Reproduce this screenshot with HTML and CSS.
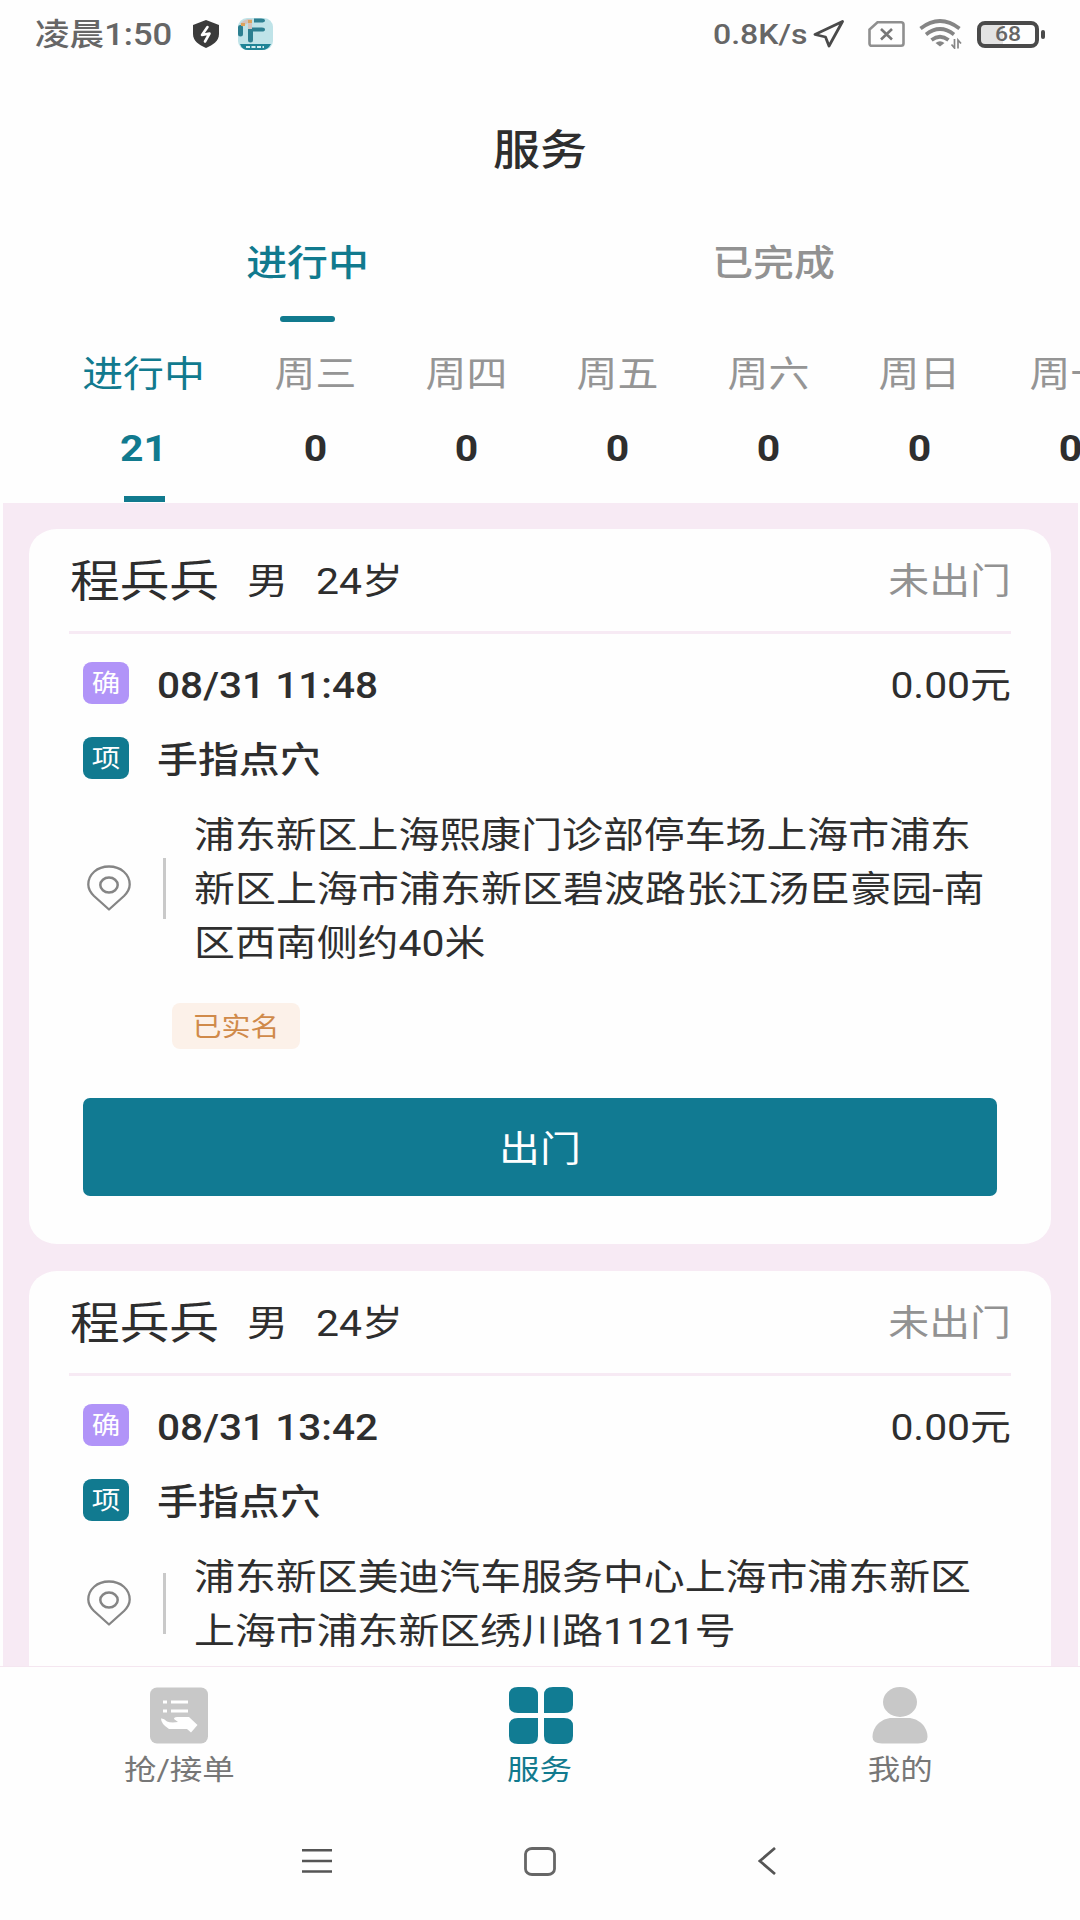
FILE: index.html
```html
<!DOCTYPE html>
<html lang="zh-CN">
<head>
<meta charset="utf-8">
<title>服务</title>
<link rel="stylesheet" href="styles.css">
</head>
<body>
<div class="screen">
  <header class="status">
    <span class="t clock">凌晨1:50</span>
    <svg class="shield" width="28" height="28" viewBox="0 0 28 28"><path d="M14 0 27 5V14C27 21 21 25 14 28 7 25 1 21 1 14V5Z" fill="#3b3b3b"/><path d="M15.500 7 10 15 17.500 13.500 13 21.500" fill="none" stroke="#fff" stroke-width="2.600" stroke-linejoin="round" stroke-linecap="round"/></svg>
    <svg class="app" width="37" height="32" viewBox="0 0 37 32"><rect x="1" width="35" height="32" rx="9" fill="#bfe3e8"/><path d="M1 9Q1 7 3.500 7T6 9V16Q6 18.500 3.500 18.500T1 16ZM17 .5H24Q28 .5 28 2.500T24 4.500H17ZM11 9.500H25Q28 9.500 28 11.500T25 13.500H16V22Q16 24.500 13.500 24.500T11 22Z" fill="#2c7f90"/><path d="M3 6Q6 2 11 1H15V11H11V5L6 8Z" fill="#d3c3bd"/><path d="M4 5H8V8H4ZM11 2H15V5H11Z" fill="#dda35c"/><path d="M3 26H34Q31 32 25 32H11Q5 32 3 26Z" fill="#1f8496"/><path d="M9 29H27" stroke="#d5eef1" stroke-width="2" stroke-dasharray="4 1.500"/></svg>
    <span class="t speed">0.8K/s</span>
    <svg class="loc" width="32" height="28" viewBox="0 0 32 28"><path d="M29.500 1.500 2 14.500 12.500 17 16 26Z" fill="none" stroke="#4a4a4a" stroke-width="2.800" stroke-linejoin="round"/></svg>
    <svg class="sim" width="37" height="26" viewBox="0 0 37 26"><path d="M9.500 1.300H33Q35.500 1.300 35.500 3.500V22.500Q35.500 24.700 33 24.700H4Q1.500 24.700 1.500 22.500V8.500Z" fill="none" stroke="#8f8f8f" stroke-width="2.600"/><path d="M13 8 24 18.500M24 8 13 18.500" stroke="#777" stroke-width="2.600"/></svg>
    <svg class="wifi" width="43" height="30" viewBox="0 0 43 30"><g fill="none" stroke="#858585" stroke-width="3.700"><path d="M1.500 9.500Q21 -5.500 40.500 9.500"/><path d="M7 15.500Q21 4.500 35 15.500"/><path d="M12.500 21Q21 14.500 29.500 21"/></g><path d="M16.500 24Q21 20.500 25.500 24L21 27.500Z" fill="#858585"/><path d="M35.500 20V29L32.500 25.500M39 29.500V21L42 24.500" fill="none" stroke="#858585" stroke-width="1.700"/></svg>
    <span class="battery"><span class="t">68</span></span><i class="nub"></i>
  </header>
  <h1 class="title"><span class="t">服务</span></h1>
  <nav class="tabs">
    <div class="tab on"><span class="t">进行中</span><i></i></div>
    <div class="tab"><span class="t">已完成</span><i></i></div>
  </nav>
  <nav class="days">
    <div class="day on"><span class="t">进行中</span><b class="t">21</b><i></i></div>
    <div class="day"><span class="t">周三</span><b class="t">0</b></div>
    <div class="day"><span class="t">周四</span><b class="t">0</b></div>
    <div class="day"><span class="t">周五</span><b class="t">0</b></div>
    <div class="day"><span class="t">周六</span><b class="t">0</b></div>
    <div class="day"><span class="t">周日</span><b class="t">0</b></div>
    <div class="day"><span class="t">周一</span><b class="t">0</b></div>
  </nav>
  <main class="list">
    <article class="card">
      <div class="head"><span class="t name">程兵兵</span><span class="t sex">男</span><span class="t age">24岁</span><span class="t state">未出门</span></div>
      <div class="row"><span class="badge violet"><span class="t">确</span></span><span class="t strong date">08/31 11:48</span><span class="t price">0.00元</span></div>
      <div class="row item"><span class="badge"><span class="t">项</span></span><span class="t strong">手指点穴</span></div>
      <div class="addr">
        <svg class="pin" width="44" height="46" viewBox="0 0 44 46"><path d="M22 44.500 7 31C3 27 1.300 24 1.300 19.500 1.300 9.500 10 1.500 22 1.500S42.700 9.500 42.700 19.500C42.700 24 41 27 37 31Z" fill="none" stroke="#858585" stroke-width="2.300" stroke-linejoin="round"/><ellipse cx="22" cy="20" rx="8.700" ry="7.500" fill="none" stroke="#858585" stroke-width="2.500"/></svg>
        <i class="bar"></i>
        <p><span class="t">浦东新区上海熙康门诊部停车场上海市浦东</span><span class="t wide">新区上海市浦东新区碧波路张江汤臣豪园-南</span><span class="t">区西南侧约40米</span></p>
      </div>
      <div class="chip"><span class="t">已实名</span></div>
      <div class="go"><span class="t">出门</span></div>
    </article>
    <article class="card">
      <div class="head"><span class="t name">程兵兵</span><span class="t sex">男</span><span class="t age">24岁</span><span class="t state">未出门</span></div>
      <div class="row"><span class="badge violet"><span class="t">确</span></span><span class="t strong date">08/31 13:42</span><span class="t price">0.00元</span></div>
      <div class="row item"><span class="badge"><span class="t">项</span></span><span class="t strong">手指点穴</span></div>
      <div class="addr">
        <svg class="pin" width="44" height="46" viewBox="0 0 44 46"><path d="M22 44.500 7 31C3 27 1.300 24 1.300 19.500 1.300 9.500 10 1.500 22 1.500S42.700 9.500 42.700 19.500C42.700 24 41 27 37 31Z" fill="none" stroke="#858585" stroke-width="2.300" stroke-linejoin="round"/><ellipse cx="22" cy="20" rx="8.700" ry="7.500" fill="none" stroke="#858585" stroke-width="2.500"/></svg>
        <i class="bar"></i>
        <p><span class="t">浦东新区美迪汽车服务中心上海市浦东新区</span><span class="t">上海市浦东新区绣川路1121号</span></p>
      </div>
    </article>
  </main>
  <nav class="bottom">
    <div class="dest first"><svg width="58" height="57" viewBox="0 0 58 57"><rect width="58" height="56" y=".5" rx="7" fill="#c8c8c8"/><path d="M13 15H17M13 24H17M21 15H38M21 24H38" stroke="#fff" stroke-width="3.200"/><path d="M11 31.500Q13.500 31 17 34.500 21 36 28 35L24 32Q24 30 27 30H39L47.500 38 41 45.500 37 42H19Q11 37 11 31.500Z" fill="#fff"/></svg><span class="t">抢/接单</span></div>
    <div class="dest on"><svg width="64" height="57" viewBox="0 0 64 57"><g fill="#117c93"><path d="M9 0H20Q29 0 29 8V26H9Q0 26 0 18V8Q0 0 9 0Z"/><path d="M44 0H55Q64 0 64 8V18Q64 26 55 26H35V8Q35 0 44 0Z"/><path d="M9 31H29V49Q29 57 20 57H9Q0 57 0 49V39Q0 31 9 31Z"/><path d="M35 31H55Q64 31 64 39V49Q64 57 55 57H44Q35 57 35 49Z"/></g></svg><span class="t">服务</span></div>
    <div class="dest"><svg width="56" height="57" viewBox="0 0 56 57"><g fill="#c8c8c8"><ellipse cx="28" cy="15" rx="17" ry="15"/><path d="M20 31H36C47 31 55.500 40 55.500 50Q55.500 56.500 46 56.500H10Q.5 56.500 .5 50C.5 40 9 31 20 31Z"/></g></svg><span class="t">我的</span></div>
  </nav>
  <footer class="sys">
    <svg width="30" height="26" viewBox="0 0 30 26"><path d="M0 2.300H30M0 12.900H30M0 23.600H30" stroke="#555" stroke-width="2.500"/></svg>
    <svg width="32" height="29" viewBox="0 0 32 29"><rect x="1.500" y="1.500" width="29" height="26" rx="6.500" ry="5.500" fill="none" stroke="#666" stroke-width="2.800"/></svg>
    <svg width="18" height="28" viewBox="0 0 18 28"><path d="M17 1 1.800 14 17 27" fill="none" stroke="#555" stroke-width="2.700"/></svg>
  </footer>
</div>
</body>
</html>
```
FILE: styles.css
```css
* { box-sizing: border-box; margin: 0; padding: 0; }
body { width: 1080px; height: 1920px; overflow: hidden; background: #fefefe; color: #2e2e2e; font-family: Roboto, "Noto Sans CJK SC", sans-serif; font-size: 40.9px; }
.screen { width: 1080px; height: 1920px; display: flex; flex-direction: column; overflow: hidden; }
svg { display: block; flex: none; }
i { display: block; }
/* Text is set slightly wider than tall throughout the screen */
.t { display: block; flex: none; white-space: nowrap; line-height: 54px; transform: scaleY(.889); }

.status { height: 68px; display: flex; align-items: center; padding-left: 35px; color: #666; font-size: 34.600px; font-weight: 500; }
.clock { width: 157px; }
.app { margin-left: 17px; }
.speed { margin-left: 439px; width: 100px; font-size: 32px; }
.sim { margin-left: 23px; }
.wifi { margin-left: 14px; }
.battery { margin-left: 15px; width: 62px; height: 27px; padding-top: 2px; border: 4px solid #4a4a4a; border-radius: 8px; display: flex; align-items: center; justify-content: center; font-size: 23px; background: linear-gradient(90deg, #e3e3e3 40%, #fefefe 40%); flex: none; }
.nub { width: 4px; height: 9px; margin-left: 2px; border-radius: 2px; background: #4a4a4a; }

.title { height: 164px; display: flex; align-items: center; justify-content: center; padding-top: 2px; font-size: 47px; font-weight: 500; }
.tabs { height: 90px; display: flex; padding-left: 74px; }
.tab { width: 467px; display: flex; flex-direction: column; align-items: center; color: #929292; font-weight: 500; }
.tab + .tab { width: 465px; }
.tab .t { margin-top: 5px; }
.tab i { width: 55px; height: 6px; margin-top: 25px; border-radius: 3px; }
.tab.on { color: #117a8e; }
.tab.on i { background: #117a8e; }
.days { height: 181px; display: flex; padding-left: 47px; }
.day { width: 151px; flex: none; display: flex; flex-direction: column; align-items: center; color: #959595; padding-top: 26px; }
.day b { color: #2e2e2e; font-weight: 700; margin-top: 20px; }
.day.on { width: 193px; }
.day.on, .day.on b { color: #117a8e; }
.day i { width: 41px; height: 6px; margin: 20px 0 0 1px; background: #117a8e; }

.list { height: 1163px; margin: 0 2px 0 3px; padding: 26px 27px 0 26px; background: #f7eaf4; overflow: hidden; display: flex; flex-direction: column; gap: 27px; }
.card { height: 715px; flex: none; background: #fefefe; border-radius: 28px / 25px; padding: 0 40px 0 40px; }
.head { height: 105px; display: flex; align-items: center; padding: 4px 0 0 1px; border-bottom: 3px solid #f7eaf4; }
.name { font-size: 49.700px; }
.sex { margin-left: 28px; }
.age { margin-left: 28px; }
.state { margin-left: auto; color: #929292; }
.row { height: 42px; margin-top: 28px; padding-left: 14px; display: flex; align-items: center; }
.row.item { margin-top: 33px; }
.badge { width: 46px; height: 42px; border-radius: 9px / 8px; background: #117a90; color: #fff; font-size: 28.500px; display: flex; align-items: center; justify-content: center; padding-top: 2px; }
.badge.violet { background: #b194f8; }
.strong { margin: 5px 0 0 28px; font-weight: 500; }
.date { font-size: 40.600px; }
.price { margin: 5px 0 0 auto; }
.addr { margin-top: 28px; display: flex; align-items: center; padding-left: 18px; }
.addr p { padding-top: 2px; margin-bottom: -2px; }
.wide { letter-spacing: .12px; }
.bar { width: 3px; height: 61px; background: #c9c9c9; margin: 0 28px 0 32px; }
.chip { width: 128px; height: 46px; margin: 34px 0 0 103px; padding-top: 2px; border-radius: 8px; background: #fcf1e9; color: #d08a4a; font-size: 29px; display: flex; align-items: center; justify-content: center; }
.go { width: 914px; height: 98px; margin: 49px 0 0 14px; padding-top: 5px; border-radius: 7px; background: #117a92; color: #fff; display: flex; align-items: center; justify-content: center; }

.bottom { height: 127px; flex: none; border-top: 1px solid #f5e6f0; display: flex; padding: 20px 0 0 1px; justify-content: center; font-size: 32.500px; color: #777; }
.dest { width: 360px; display: flex; flex-direction: column; align-items: center; }
.dest .t { margin-top: -1px; }
.dest.first { padding-right: 3px; }
.dest.on { color: #117a8e; }
.dest.on .t { margin-left: -2px; }
.sys { flex: 1; display: grid; grid-template-columns: 30px 32px 18px; column-gap: 192px; padding: 9px 0 0 302px; align-items: center; }
.sys svg:last-child { margin-left: 10px; }
```
